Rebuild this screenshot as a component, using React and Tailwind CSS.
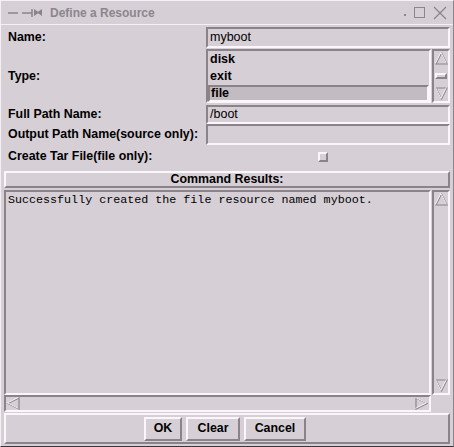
const sunken = 'border-2 border-t-[#8a848a] border-l-[#8a848a] border-b-[#faf6fa] border-r-[#faf6fa]';
const raised = 'border-2 border-t-[#faf6fa] border-l-[#faf6fa] border-b-[#8a848a] border-r-[#8a848a]';

function Arrow({ dir }) {
  const pts = {
    up: '1,12 6.5,1 12,12',
    down: '1,1 6.5,12 12,1',
    left: '12,1 1,6.5 12,12',
    right: '1,1 12,6.5 1,12',
  }[dir];
  return (
    <svg width="13" height="13" viewBox="0 0 13 13" className="block">
      <polygon points={pts} fill="#d6cfd6" stroke="#8a848a" strokeWidth="1.2" />
      <polyline points={pts} fill="none" stroke="#ffffff" strokeWidth="0.8" transform="translate(-0.6,-0.6)" />
    </svg>
  );
}

function VScroll({ thumb }) {
  return (
    <div className={`w-[18px] h-full flex flex-col items-center justify-between py-[1px] ${sunken}`}>
      <Arrow dir="up" />
      {thumb && <div className={`w-[12px] h-[6px] ${raised}`} />}
      <Arrow dir="down" />
    </div>
  );
}

function Entry({ value, h = 'h-[21px]' }) {
  return (
    <div className={`flex-1 ${h} ${sunken} flex items-center px-[2px] font-normal text-[12.5px] text-black`}>
      {value}
    </div>
  );
}

function Row({ label, children, h }) {
  return (
    <div className={`flex items-center ${h}`}>
      <div className="w-[202px] pl-[4px] font-bold text-[12.4px] text-black whitespace-nowrap">{label}</div>
      {children}
    </div>
  );
}

export default function App() {
  return (
    <div className="w-[454px] h-[447px] bg-[#d6cfd6] border border-[#f4f0f4] border-r-[#8a848a] border-b-[#3a363a] flex flex-col text-black" style={{ fontFamily: '"Liberation Sans", Arial, sans-serif' }}>
      {/* title bar */}
      <div className="h-[24px] flex items-center px-[6px] border-b border-b-[#f4f0f4] shrink-0">
        <svg width="36" height="14" viewBox="0 0 36 14" className="mr-[7px]">
          <line x1="1" y1="7" x2="11" y2="7" stroke="#8a848a" strokeWidth="1.5" />
          <line x1="15" y1="7" x2="25" y2="7" stroke="#8a848a" strokeWidth="1.5" />
          <line x1="25" y1="3" x2="25" y2="11" stroke="#8a848a" strokeWidth="1.5" />
          <polygon points="27,3 32,6.5 27,10" fill="#8a848a" />
          <polygon points="35,3 30,6.5 35,10" fill="#8a848a" />
        </svg>
        <span className="font-bold text-[12px] text-[#8c868c]">Define a Resource</span>
        <div className="flex-1" />
        <div className="flex items-center gap-[8px] text-[#8c868c]">
          <div className="w-[2px] h-[2px] bg-[#8c868c] mt-[4px]" />
          <div className="w-[11px] h-[11px] border border-[#8c868c]" />
          <svg width="14" height="14" viewBox="0 0 14 14">
            <line x1="1" y1="1" x2="13" y2="13" stroke="#8c868c" strokeWidth="1.3" />
            <line x1="13" y1="1" x2="1" y2="13" stroke="#8c868c" strokeWidth="1.3" />
          </svg>
        </div>
      </div>

      <div className="flex-1 flex flex-col px-[3px] pt-[1px]">
        <Row label="Name:" h="h-[22px]">
          <Entry value="myboot" />
        </Row>
        <Row label="Type:" h="h-[56px]">
          <div className="flex-1 flex h-[54px] gap-[1px]">
            <div className={`flex-1 ${sunken} flex flex-col justify-center font-bold text-[12.5px]`}>
              <div className="h-[17px] flex items-center px-[2px]">disk</div>
              <div className="h-[17px] flex items-center px-[2px]">exit</div>
              <div className={`h-[17px] flex items-center px-[1px] bg-[#c2bbc2] ${sunken}`}>file</div>
            </div>
            <VScroll thumb />
          </div>
        </Row>
        <Row label="Full Path Name:" h="h-[20px]">
          <Entry value="/boot" h="h-[19px]" />
        </Row>
        <Row label="Output Path Name(source only):" h="h-[21px]">
          <Entry value="" />
        </Row>
        <div className="flex items-center h-[23px]">
          <div className="w-[202px] pl-[4px] font-bold text-[12.4px] whitespace-nowrap">Create Tar File(file only):</div>
          <div className="flex-1 flex">
            <div className={`ml-[112px] w-[10px] h-[10px] ${raised} border`} />
          </div>
        </div>

        <div className={`mt-[3px] h-[17px] ${raised} border flex items-center justify-center font-bold text-[12.4px]`}>
          Command Results:
        </div>

        <div className="mt-[2px] flex h-[205px] gap-[1px]">
          <div className={`flex-1 ${sunken} px-[2px] pt-[1px] text-[11.7px] leading-[14px] whitespace-nowrap overflow-hidden`} style={{ fontFamily: '"Liberation Mono", "Courier New", monospace' }}>
            Successfully created the file resource named myboot.
          </div>
          <VScroll />
        </div>
        <div className="flex h-[17px] pr-[19px]">
          <div className={`flex-1 ${sunken} flex items-center justify-between px-[1px]`}>
            <Arrow dir="left" />
            <Arrow dir="right" />
          </div>
        </div>

        <div className={`mt-[1px] h-[31px] ${raised} border flex items-center justify-center gap-[4px] font-bold text-[12.4px]`}>
          <div className={`ml-[-4px] w-[38px] h-[24px] ${raised} flex items-center justify-center`}>OK</div>
          <div className={`w-[54px] h-[24px] ${raised} flex items-center justify-center`}>Clear</div>
          <div className={`w-[62px] h-[24px] ${raised} flex items-center justify-center`}>Cancel</div>
        </div>
      </div>
    </div>
  );
}
